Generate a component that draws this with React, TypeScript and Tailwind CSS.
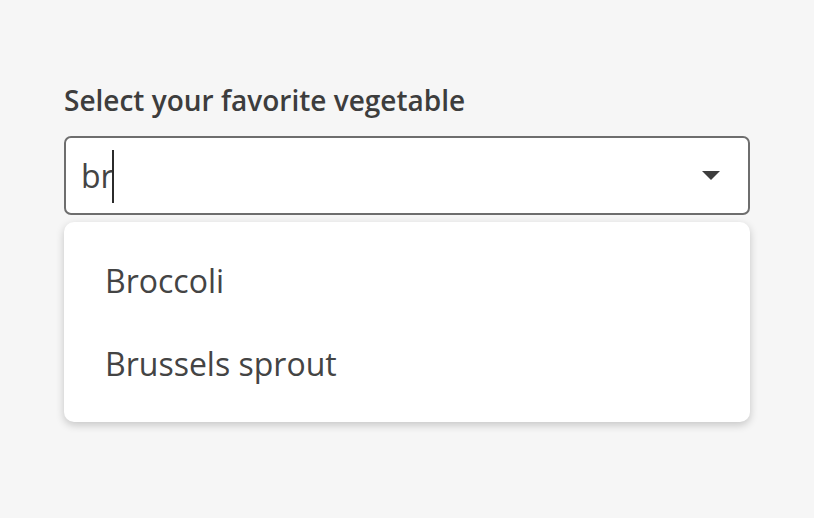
import React from "react";

const items = ["Broccoli", "Brussels sprout"];

export default function App() {
  return (
    <div
      className="w-[814px] h-[518px] bg-[#f6f6f6] text-[#3d3d3d] px-16 pt-[82px]"
      style={{ fontFamily: '"Open Sans", "Noto Sans", sans-serif' }}
    >
      <label className="block text-[28px] leading-[36px] font-semibold">
        Select your favorite vegetable
      </label>
      <div className="mt-[18px] h-[79px] w-[686px] rounded-[7px] border-2 border-[#6e6e6e] bg-white flex items-center pl-[15px] pr-[28px]">
        <span className="text-[32px] leading-none text-[#444]">br</span>
        <span className="ml-[-2px] mt-[2px] h-[53px] w-[2px] bg-[#2b2b2b]" />
        <div className="flex-1" />
        <svg width="18" height="10" viewBox="0 0 18 10">
          <path d="M0 0 L18 0 L9 9 Z" fill="#3d3d3d" />
        </svg>
      </div>
      <ul className="mt-[7px] w-[686px] rounded-[10px] bg-white py-[17px] text-[#444] shadow-[0_3px_8px_rgba(0,0,0,0.2)]">
        {items.map((item) => (
          <li
            key={item}
            className="h-[83px] flex items-center pl-[41px] text-[32px]"
          >
            {item}
          </li>
        ))}
      </ul>
    </div>
  );
}
